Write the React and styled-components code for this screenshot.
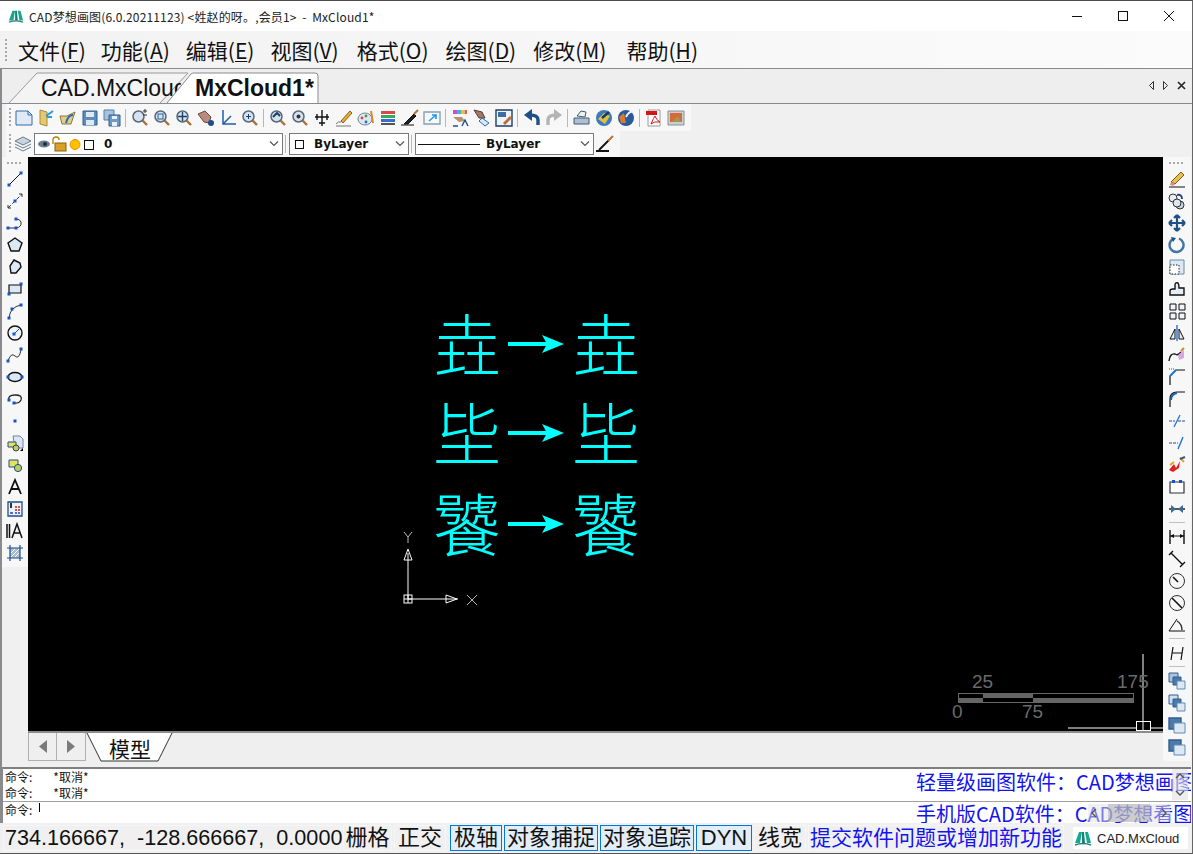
import React from 'react';
import styled, { createGlobalStyle } from 'styled-components';

const GlobalStyle = createGlobalStyle`
    html, body {
        margin: 0;
        padding: 0;
        background: #f0f0f0;
        font-family: "Liberation Sans", "Noto Sans CJK SC", sans-serif;
    }
    #root {
        width: 1193px;
        height: 854px;
        overflow: hidden;
    }
`;

const Window = styled.div`
    width: 1193px;
    height: 854px;
    display: flex;
    flex-direction: column;
    box-sizing: border-box;
    border-top: 1px solid #4a4a4a;
    border-bottom: 1px solid #555;
    border-right: 1px solid #666;
    background: #f0f0f0;
    overflow: hidden;
`;

const TitleBar = styled.div`
    height: 30px;
    flex: none;
    background: #fff;
    display: flex;
    align-items: center;
    padding-left: 8px;
`;

const TitleText = styled.div`
    margin-left: 5px;
    font-family: "Noto Sans CJK SC", sans-serif;
    font-size: 12px;
    letter-spacing: 0.15px;
    color: #222;
    white-space: pre;
    flex: 1;
`;

const WinButton = styled.div`
    width: 46px;
    height: 30px;
    display: flex;
    align-items: center;
    justify-content: center;
`;

const MenuBar = styled.div`
    height: 38px;
    flex: none;
    background: linear-gradient(90deg, #f2f2f2, #fbfbfb);
    display: flex;
    align-items: center;
    border-bottom: 1px solid #8a8a8e;
    padding-left: 5px;
    box-sizing: border-box;
`;

const Gripper = styled.div`
    width: 2px;
    height: ${(p) => p.$h || 20}px;
    margin-right: ${(p) => p.$gap ?? 11}px;
    flex: none;
    background-image: linear-gradient(#a8a8a8 50%, transparent 50%);
    background-size: 2px 4px;
`;

const MenuItem = styled.div`
    font-family: "Noto Sans CJK SC", sans-serif;
    font-size: 21px;
    color: #111;
    margin-right: ${(p) => p.$gap ?? 16}px;
    white-space: nowrap;
    u { text-underline-offset: 2px; text-decoration-thickness: 1px; }
`;

const Workspace = styled.div`
    height: 754px;
    flex: none;
    display: flex;
    flex-direction: column;
    box-sizing: border-box;
    border-left: 2px solid #8a8a8e;
`;

const TabBar = styled.div`
    height: 35px;
    flex: none;
    position: relative;
    border-bottom: 1px solid #8a8a8e;
    box-sizing: border-box;
    background: #eee;
`;

const TabShape = styled.svg`
    position: absolute;
    left: -2px;
    top: 0;
`;

const TabLabel = styled.div`
    position: absolute;
    top: 4px;
    left: ${(p) => p.$left}px;
    width: ${(p) => p.$width}px;
    overflow: hidden;
    font-size: 23px;
    line-height: 30px;
    font-weight: ${(p) => (p.$active ? 700 : 400)};
    color: #111;
    white-space: nowrap;
`;

const TabArrows = styled.div`
    position: absolute;
    right: 6px;
    top: 12px;
    display: flex;
    align-items: center;
    gap: 9px;
`;

const ToolRow = styled.div`
    height: ${(p) => p.$h}px;
    flex: none;
    display: flex;
    align-items: center;
    padding-left: 4px;
    background: #f0f0f0;
`;

const ToolStrip = styled.div`
    display: flex;
    align-items: center;
    height: 100%;
    background: #f7f7f7;
    padding-left: 3px;
    padding-right: 4px;
`;

const ToolIcon = styled.div`
    width: 22px;
    height: 22px;
    flex: none;
    display: flex;
    align-items: center;
    justify-content: center;

    & svg {
        width: 18px;
        height: 18px;
    }
`;

const ToolSep = styled.div`
    width: 1px;
    height: 18px;
    background: #b8b8b8;
    margin: 0 3px 0 2px;
    flex: none;
`;

const Combo = styled.div`
    width: ${(p) => p.$w}px;
    height: 22px;
    box-sizing: border-box;
    border: 1px solid #7a7a7a;
    background: #fff;
    display: flex;
    align-items: center;
    font-size: 12px;
    font-family: "DejaVu Sans", sans-serif;
    font-weight: 700;
    color: #111;
    position: relative;
    flex: none;
`;

const ComboArrow = styled.svg`
    position: absolute;
    right: 3px;
    top: 7px;
`;

const ComboIcons = styled.svg`
    margin-left: 2px;
    flex: none;
`;

const ComboValue = styled.span`
    margin-left: 9px;
`;

const Check = styled.span`
    width: 9px;
    height: 9px;
    box-sizing: border-box;
    border: 1px solid #111;
    flex: none;
    margin: 0 10px 0 5px;
`;

const LineSample = styled.span`
    width: 62px;
    height: 1px;
    background: #111;
    margin: 0 6px 0 2px;
`;

const Middle = styled.div`
    height: 610px;
    flex: none;
    display: flex;
    align-items: flex-start;
    background: #f0f0f0;
`;

const SideBar = styled.div`
    width: ${(p) => p.$w}px;
    flex: none;
    display: flex;
    flex-direction: column;
    align-items: center;
    box-sizing: border-box;
    padding-top: 5px;
    background: #f7f7f7;
    margin-right: ${(p) => (p.$right ? 1 : 0)}px;
    height: ${(p) => p.$h}px;
`;

const SideGrip = styled.div`
    width: 16px;
    height: 2px;
    margin-bottom: 4px;
    flex: none;
    background-image: linear-gradient(90deg, #a8a8a8 50%, transparent 50%);
    background-size: 4px 2px;
`;

const SideIcon = styled.div`
    width: 22px;
    height: 22px;
    flex: none;
    display: flex;
    align-items: center;
    justify-content: center;
`;

const SideSep = styled.div`
    width: 16px;
    height: 1px;
    background: #c0c0c0;
    margin: 2px 0 3px;
    flex: none;
`;

const CanvasColumn = styled.div`
    flex: 1;
    min-width: 0;
    display: flex;
    flex-direction: column;
`;

const Canvas = styled.div`
    height: 574px;
    flex: none;
    background: #000;
    position: relative;
    overflow: hidden;
    border-bottom: 2px solid #8c8c8c;
`;

const Glyph = styled.div`
    position: absolute;
    left: ${(p) => p.$x}px;
    top: ${(p) => p.$y}px;
    font-family: "Noto Sans CJK SC", sans-serif;
    font-size: 68px;
    font-weight: 300;
    line-height: 68px;
    color: #00ffff;
`;

const CanvasArt = styled.svg`
    position: absolute;
    left: 0;
    top: 0;
`;

const ScaleNum = styled.div`
    position: absolute;
    left: ${(p) => p.$x}px;
    top: ${(p) => p.$y}px;
    color: #6a6a6a;
    font-size: 19px;
    line-height: 20px;
`;

const SheetBar = styled.div`
    height: 32px;
    flex: none;
    display: flex;
    align-items: flex-start;
    position: relative;
    background: #efefef;
`;

const SheetNav = styled.div`
    width: 29px;
    height: 28px;
    box-sizing: border-box;
    border: 1px solid #b0b0b0;
    border-left-width: ${(p) => (p.$first ? 1 : 0)}px;
    border-top: 0;
    display: flex;
    align-items: center;
    justify-content: center;
`;

const SheetTab = styled.svg`
    flex: none;
`;

const SheetLabel = styled.div`
    position: absolute;
    left: 81px;
    top: 1px;
    font-family: "Noto Sans CJK SC", sans-serif;
    font-size: 21px;
    line-height: 28px;
    color: #111;
`;

const CommandArea = styled.div`
    height: 56px;
    flex: none;
    display: flex;
    flex-direction: column;
    box-sizing: border-box;
    margin-right: 1px;
    border-top: 2px solid #7f7f7f;
    border-left: 1px solid #8a8a8e;
    background: #fff;
    position: relative;
    overflow: hidden;
`;

const History = styled.div`
    height: 33px;
    flex: none;
    box-sizing: border-box;
    border-bottom: 1px solid #a0a0a0;
    padding-left: 2px;
`;

const CmdLine = styled.div`
    height: 16px;
    padding-left: ${(p) => p.$pad || 0}px;
    font-family: "Noto Sans CJK SC", sans-serif;
    font-size: 12px;
    line-height: 16px;
    color: #111;
    display: flex;
    align-items: center;
`;

const CmdValue = styled.span`
    margin-left: 21px;
`;

const Caret = styled.span`
    width: 1px;
    height: 9px;
    margin-left: 7px;
    margin-top: -5px;
    background: #000;
`;

const AdLine = styled.div`
    position: absolute;
    left: 913px;
    top: ${(p) => p.$y}px;
    font-family: "Noto Sans CJK SC", sans-serif;
    font-size: 20px;
    line-height: 24px;
    color: #1414ee;
    white-space: nowrap;
`;

const VScroll = styled.div`
    position: absolute;
    right: 3px;
    top: 0;
    width: 16px;
    height: 31px;
    background: rgba(225, 225, 225, 0.6);
    display: flex;
    flex-direction: column;
    align-items: center;
    justify-content: space-between;
    padding: 4px 0;
    box-sizing: border-box;
`;

const HScroll = styled.div`
    position: absolute;
    right: 21px;
    top: 35px;
    width: 82px;
    height: 18px;
    background: rgba(225, 225, 225, 0.5);
    display: flex;
    align-items: center;
    justify-content: space-between;
    padding: 0 3px;
    box-sizing: border-box;
`;

const HThumb = styled.div`
    width: 42px;
    height: 18px;
    background: rgba(170, 170, 170, 0.5);
`;

const StatusBar = styled.div`
    flex: 1;
    min-height: 0;
    display: flex;
    align-items: center;
    gap: 2px;
    padding-left: 3px;
    background: #f0f0f0;
`;

const StatusCell = styled.div`
    width: ${(p) => p.$w}px;
    height: 26px;
    margin-right: ${(p) => p.$mr || 0}px;
    box-sizing: border-box;
    border: 1px solid ${(p) => (p.$on ? '#0078d7' : '#f6f6f6')};
    background: ${(p) => (p.$on ? '#e1edf7' : 'transparent')};
    font-family: "Liberation Sans", "Noto Sans CJK SC", sans-serif;
    font-size: ${(p) => p.$size || 22}px;
    line-height: 24px;
    text-align: ${(p) => (p.$left ? 'left' : 'center')};
    padding-left: ${(p) => (p.$left ? 1 : 0)}px;
    color: ${(p) => p.$color || '#111'};
    white-space: pre;
    flex: none;
`;

const LogoCell = styled.div`
    width: 115px;
    height: 22px;
    background: #fff;
    margin-left: 7px;
    display: flex;
    align-items: center;
    padding-left: 1px;
    box-sizing: border-box;
    gap: 5px;
    font-size: 13px;
    color: #222;
    flex: none;
`;

// small cad style icons, drawn because the icon packages have nothing like them
const Svg = ({ children, size = 18 }) => (
    <svg width={size} height={size} viewBox="0 0 18 18" fill="none">
        {children}
    </svg>
);

const Dot = ({ x, y }) => <rect x={x - 1.5} y={y - 1.5} width="3" height="3" fill="#1456c8" />;

const blue = '#1f4f86';

const Logo = ({ size = 16 }) => (
    <svg width={size} height={size} viewBox="0 0 18 16">
        <path d="M1 13 L5 2 H8 L6 13Z" fill="#16a88e" />
        <path d="M8 2 H10 L11 13 H8Z" fill="#1f7f78" />
        <path d="M11 2 H14 L17 13 H13Z" fill="#16a88e" />
        <path d="M1 15 Q9 12 17 15" stroke="#1f7f78" strokeWidth="1.4" fill="none" />
    </svg>
);

const Magnifier = ({ mark }) => (
    <Svg>
        <circle cx="7.5" cy="7.5" r="5.5" fill="#d6e2ee" stroke="#56687c" strokeWidth="1.5" />
        <path d="M11.5 11.5 L16 16" stroke="#a8703a" strokeWidth="2.4" />
        {mark}
    </Svg>
);

const Chevron = ({ up }) => (
    <svg width="10" height="6">
        <path d={up ? 'M1 5 L5 1 L9 5' : 'M1 1 L5 5 L9 1'} fill="none" stroke="#555" strokeWidth="1.4" />
    </svg>
);

const ComboChevron = () => (
    <ComboArrow width="10" height="6">
        <path d="M1 0.5 L5 4.5 L9 0.5" fill="none" stroke="#555" strokeWidth="1.2" />
    </ComboArrow>
);

const topIcons = [
    <Svg key="new"><path d="M1 2 H13 L17 6 V16 H1Z" fill="#dfeaf6" stroke="#2f6ca8" /><path d="M13 2 V6 H17" stroke="#2f6ca8" /></Svg>,
    <Svg key="open"><path d="M3 1 L10 3 V17 L3 15Z" fill="#e8c86e" stroke="#a88a3a" /><path d="M9 7 L16 2 M10 8 L15 8" stroke="#2a9ae0" strokeWidth="2" /></Svg>,
    <Svg key="open2"><path d="M1 7 H8 L16 3 L12 15 H3Z" fill="#e0cc8c" stroke="#8a7a3e" /><path d="M7 14 Q9 6 14 6" stroke="#2f6ca8" strokeWidth="2" /></Svg>,
    <Svg key="save"><path d="M2 2 H16 V16 H2Z" fill="#5f8dbb" stroke="#2f5f92" /><path d="M5 3 H13 V8 H5Z M5 11 H13 V16 H5Z" fill="#dfe9f3" /></Svg>,
    <Svg key="saveall"><path d="M1 1 H11 V11 H1Z" fill="#a9c3dd" stroke="#4f7fae" /><path d="M6 6 H17 V17 H6Z" fill="#6f9ac4" stroke="#2f5f92" /><path d="M9 7 H14 V10 H9Z M9 13 H14 V17 H9Z" fill="#e8f0f8" /></Svg>,
    'sep',
    <Magnifier key="z1" mark={<path d="M14 0 V4 M12 2 H16 M12 6 H16" stroke="#333" />} />,
    <Magnifier key="z2" mark={<rect x="5" y="5" width="5" height="5" stroke="#2f5f92" />} />,
    <Magnifier key="z3" mark={<path d="M7.5 3 V12 M3 7.5 H12" stroke="#1f3f66" strokeWidth="1.4" />} />,
    <Svg key="hand"><path d="M1 5 L8 2 L14 8 L12 14 L7 13Z" fill="#b98a80" stroke="#6a4a44" /><circle cx="14" cy="14" r="3" fill="#1f4f86" /></Svg>,
    <Svg key="axes"><path d="M4 1 V15 H17 M4 15 L12 7" stroke="#1f5fa8" strokeWidth="1.5" /></Svg>,
    <Magnifier key="z4" mark={<path d="M7.5 5 V10 M5 7.5 H10" stroke="#1f3f66" />} />,
    'sep',
    <Magnifier key="z5" mark={<path d="M4 8 L8 4 L11 7" stroke="#1f3f66" strokeWidth="2" />} />,
    <Magnifier key="z6" mark={<circle cx="7.5" cy="7.5" r="2" fill="#333" />} />,
    <Svg key="pan"><path d="M9 1 V17 M2 8 H16 M4 5 V11 M14 5 V11 M6 14 H12" stroke="#111" strokeWidth="1.4" /></Svg>,
    <Svg key="brush"><path d="M6 12 L15 2 L17 4 L8 14Z" fill="#e8b13a" stroke="#8a5a1e" /><path d="M1 15 Q3 12 6 13 M1 17 H16" stroke="#777" /></Svg>,
    <Svg key="palette"><ellipse cx="8" cy="10" rx="7" ry="6" fill="#dfe7ee" stroke="#6a86a0" /><circle cx="5" cy="9" r="1.4" fill="#e04040" /><circle cx="9" cy="7" r="1.4" fill="#3aa040" /><circle cx="9" cy="13" r="1.4" fill="#3a60e0" /><path d="M14 2 L16 14" stroke="#d88a2a" strokeWidth="2" /></Svg>,
    <Svg key="layers"><path d="M2 2 H16 V5 H2Z" fill="#d84a4a" /><path d="M2 6 H16 V9 H2Z" fill="#3aa85a" /><path d="M2 10 H16 V13 H2Z" fill="#3a6ad8" /><path d="M2 14 H16 V16 H2Z" fill="#555" /></Svg>,
    <Svg key="match"><path d="M0 16 H13 M3 15 L13 5 L15 7 L7 15Z" fill="#222" stroke="#111" /><path d="M13 5 L17 1" stroke="#b8703a" strokeWidth="2" /></Svg>,
    <Svg key="tbl"><path d="M1 3 H17 V15 H1Z" fill="#f4f8fb" stroke="#8aa0b4" strokeWidth="1.4" /><path d="M6 12 L13 6 M9 6 H13 V10" stroke="#1f9ae8" strokeWidth="1.6" /></Svg>,
    'sep',
    <Svg key="sa"><path d="M2 1 H16 V5 H2Z" fill="#c850c8" /><path d="M6 1 H10 V5 H6Z" fill="#40b0e0" /><path d="M10 1 H14 V5 H10Z" fill="#e8c030" /><path d="M2 8 L11 8 L14 12 L8 13Z" fill="#b9907a" /><path d="M2 17 H7 M11 17 L14 11 L17 17" stroke="#1f4f86" strokeWidth="1.4" /></Svg>,
    <Svg key="prop"><path d="M1 1 L9 3 L12 9 L6 9Z" fill="#a5786e" stroke="#5a3a34" /><path d="M9 9 L16 14 L12 17 L6 12Z" fill="#d8e8f4" stroke="#2f6ca8" /></Svg>,
    <Svg key="sheet"><path d="M1 1 H17 V17 H1Z" fill="#eef3f8" stroke="#1f3f66" strokeWidth="1.4" /><path d="M3 3 H11 V8 H3Z" fill="#3f6ea0" /><path d="M9 15 L16 8" stroke="#b8703a" strokeWidth="3" /></Svg>,
    'sep',
    <Svg key="undo"><path d="M15 16 V11 Q15 6 7 6" stroke="#1f4f86" strokeWidth="3.4" /><path d="M9 0 L1 6 L9 12Z" fill="#1f4f86" /></Svg>,
    <Svg key="redo"><path d="M3 16 V11 Q3 6 11 6" stroke="#b4b4b4" strokeWidth="3.4" /><path d="M9 0 L17 6 L9 12Z" fill="#b4b4b4" /></Svg>,
    'sep',
    <Svg key="print"><path d="M4 7 L8 2 L13 3 L12 8Z" fill="#f0f0f0" stroke="#3f5a78" /><path d="M1 9 H16 V15 H1Z" fill="#aebfd0" stroke="#3f5a78" /></Svg>,
    <Svg key="globe1"><circle cx="9" cy="9" r="8" fill="#3a7abf" /><path d="M3 10 L9 4 L15 7 L10 15Z" fill="#e0c040" /><path d="M7 9 L14 3" stroke="#143a66" strokeWidth="2.4" /></Svg>,
    <Svg key="globe2"><circle cx="9" cy="9" r="8" fill="#2a5a98" /><path d="M2 8 L7 4 L9 14 L4 14Z" fill="#d87a30" /><path d="M9 8 Q12 2 16 3" stroke="#f0f0f0" strokeWidth="2" /></Svg>,
    'sep',
    <Svg key="pdf"><path d="M3 1 H15 V17 H3Z" fill="#fff" stroke="#9a9a9a" /><path d="M1 2 H12 V6 H1Z" fill="#d01818" /><path d="M6 15 Q9 8 10 7 Q11 11 15 13 Q9 12 6 15" stroke="#d01818" /></Svg>,
    <Svg key="img"><path d="M1 2 H17 V16 H1Z" fill="#c8d0d4" stroke="#8a9298" /><path d="M3 4 H15 V13 H3Z" fill="#d86a3a" /><path d="M5 13 L11 7 L14 13Z" fill="#9a9a5a" /></Svg>,
];

const leftIcons = [
    <Svg key="line"><path d="M3 15 L15 3" stroke="#111" /><Dot x={3} y={15} /><Dot x={15} y={3} /></Svg>,
    <Svg key="xline"><path d="M2 16 L16 2" stroke="#333" strokeDasharray="4 2" /><path d="M13 2 H16 V5 M2 13 V16 H5" stroke="#333" /><Dot x={9} y={9} /></Svg>,
    <Svg key="pline"><path d="M2 14 H10 Q16 13 15 8 Q14 5 10 5" stroke="#333" /><Dot x={2} y={14} /><Dot x={10} y={14} /><Dot x={10} y={5} /></Svg>,
    <Svg key="polygon"><path d="M9 2 L16 7 L13 15 H5 L2 7Z" fill="#dce8f4" stroke="#111" strokeWidth="1.4" /></Svg>,
    <Svg key="cloud"><path d="M8 2 L14 5 L15 9 L10 15 L5 15 L4 8Z" fill="#dce8f4" stroke="#111" strokeWidth="1.4" /></Svg>,
    <Svg key="rect"><path d="M3 5 H15 V13 H3Z" fill="#dce8f4" stroke="#111" strokeWidth="1.2" /><Dot x={3} y={14} /><Dot x={15} y={4} /></Svg>,
    <Svg key="arc"><path d="M3 16 Q4 5 15 3" stroke="#333" /><Dot x={3} y={16} /><Dot x={6} y={7} /><Dot x={15} y={3} /></Svg>,
    <Svg key="circle"><circle cx="9" cy="9" r="7" fill="#eef4fa" stroke="#111" strokeWidth="1.4" /><path d="M9 9 L13 5" stroke="#1456c8" /><Dot x={8} y={10} /></Svg>,
    <Svg key="spline"><path d="M2 15 Q5 6 9 10 Q13 14 15 4" stroke="#333" /><Dot x={2} y={15} /><Dot x={15} y={3} /></Svg>,
    <Svg key="ellipse"><ellipse cx="9" cy="9" rx="7" ry="4.5" fill="#dce8f4" stroke="#111" strokeWidth="1.4" /><Dot x={2} y={9} /><Dot x={16} y={9} /></Svg>,
    <Svg key="earc"><path d="M3 11 Q1 5 9 5 Q17 5 15 10 Q13 14 7 13" stroke="#222" strokeWidth="1.3" /><Dot x={3} y={10} /><Dot x={8} y={13} /></Svg>,
    <Svg key="point"><Dot x={9} y={9} /></Svg>,
    <Svg key="insert"><path d="M7 2 H14 L17 5 V14 H9Z" fill="#dde6ee" stroke="#6a86a0" /><path d="M2 8 H10 V13 H2Z" fill="#e8e060" stroke="#1f4f86" /><circle cx="10" cy="14" r="3" fill="#b8d060" stroke="#444" /><path d="M14 17 L17 14 V17Z" fill="#000" /></Svg>,
    <Svg key="block"><path d="M3 4 H12 V11 H3Z" fill="#e8e060" stroke="#1f4f86" /><circle cx="12" cy="12" r="3.6" fill="#b8d060" stroke="#1f4f86" /></Svg>,
    <Svg key="text"><path d="M3 16 L9 2 L15 16 M5.5 11 H12.5" stroke="#111" strokeWidth="1.8" /></Svg>,
    <Svg key="table"><path d="M2 2 H16 V16 H2Z" fill="#eef2f6" stroke="#1f4f86" strokeWidth="1.3" /><path d="M5 3 V8" stroke="#333" strokeWidth="2" /><path d="M9 7 H11 M12 7 H14 M9 10 H11 M12 10 H14" stroke="#c02020" strokeWidth="1.6" /><path d="M4 13 H7 M9 13 H11 M12 13 H14" stroke="#2040c0" strokeWidth="1.6" /></Svg>,
    <Svg key="mtext"><path d="M1 2 V16 M3.5 2 V16 M6 16 L11 2 L16 16 M8 11 H14" stroke="#111" strokeWidth="1.5" /></Svg>,
    <Svg key="hatch"><path d="M4 4 H14 V14 H4Z" fill="#a8bcd0" /><path d="M1 4 H17 M1 14 H17 M4 1 V17 M14 1 V17" stroke="#1f4f86" strokeWidth="1.2" /><path d="M5 13 L13 5 M5 9 L9 5 M9 13 L13 9" stroke="#fff" /></Svg>,
];

const overlap = (variant) => (
    <Svg key={`ov${variant}`}>
        {variant < 2 && <path d="M1 1 H10 V10 H1Z" fill={variant ? '#cfe0ee' : '#a8c4dc'} stroke="#2f5f92" />}
        {variant < 2 && <path d="M5 5 H13 V13 H5Z" fill="#4f79a8" stroke="#2f5f92" />}
        {variant < 2 && <path d="M9 9 H17 V17 H9Z" fill="#dce8f4" stroke="#5f8db0" />}
        {variant >= 2 && <path d="M1 2 H13 V13 H1Z" fill="#4f79a8" stroke="#2f5f92" strokeWidth="1.4" />}
        {variant >= 2 && <path d="M6 7 H17 V17 H6Z" fill="#dce8f4" stroke="#5f8db0" />}
    </Svg>
);

const rightIcons = [
    <Svg key="erase"><path d="M3 12 L13 2 L16 5 L7 14Z" fill="#e8c050" stroke="#7a5a20" /><path d="M3 12 L7 14 L5 16 L2 15Z" fill="#e08a8a" /><path d="M1 17 H17" stroke="#111" /></Svg>,
    <Svg key="copy"><circle cx="5" cy="6" r="4" fill="#e8eef4" stroke="#333" /><circle cx="12" cy="13" r="4" fill="#c8d4e0" stroke="#333" /><circle cx="9" cy="11" r="4" fill="#dfe7ee" stroke="#333" /><path d="M9 3 Q14 2 14 7" stroke="#1f4f86" strokeWidth="2" /></Svg>,
    <Svg key="move"><path d="M9 1 V17 M1 9 H17 M9 1 L6 4 M9 1 L12 4 M9 17 L6 14 M9 17 L12 14 M1 9 L4 6 M1 9 L4 12 M17 9 L14 6 M17 9 L14 12" stroke={blue} strokeWidth="2.2" /></Svg>,
    <Svg key="rotate"><path d="M5 3 A7 7 0 1 0 11 2.5" stroke="#3f74a8" strokeWidth="2.4" /><path d="M3 1 L8 2 L5 6Z" fill="#1f4f86" /></Svg>,
    <Svg key="scale"><path d="M2 2 H16 V16 H2Z" fill="#dce8f4" stroke="#6a8aa8" /><path d="M2 7 H11 V16 H2Z" fill="#fff" stroke="#222" strokeDasharray="1.5 1.5" /></Svg>,
    <Svg key="stretch"><path d="M2 15 V11 Q2 9 5 9 H7 V5 Q7 2 10 3 Q11 4 11 8 H16 V15Z" fill="#e4eef6" stroke="#111" strokeWidth="1.4" /></Svg>,
    <Svg key="array"><path d="M2 2 H8 V8 H2Z M11 2 H17 V8 H11Z M2 11 H8 V17 H2Z M11 11 H17 V17 H11Z" fill="#eef4fa" stroke="#111" /></Svg>,
    <Svg key="mirror"><path d="M2 15 L7 5 V15Z M16 15 L11 5 V15Z" fill="#e4eef6" stroke="#111" /><path d="M9 1 V17" stroke="#1f6fd0" strokeWidth="1.4" /></Svg>,
    <Svg key="edit"><path d="M1 15 Q2 7 7 8 Q10 10 13 6" stroke="#111" strokeWidth="1.4" /><path d="M10 9 L16 4 L16 12 L11 14Z" fill="#d8a8e0" /><path d="M13 5 L16 2" stroke="#d88a2a" strokeWidth="2" /></Svg>,
    <Svg key="chamfer"><path d="M2 17 V8 L8 2 H17" stroke="#111" strokeWidth="1.2" /><path d="M2 8 L8 2" stroke="#1f7fd8" strokeWidth="2" /><path d="M1 1 H7" stroke="#555" strokeDasharray="1 1" /></Svg>,
    <Svg key="fillet"><path d="M2 17 V9 Q2 2 9 2 H17" stroke="#111" strokeWidth="1.2" /><path d="M3 10 Q3 4 9 3" stroke="#1f5fa8" strokeWidth="2" /></Svg>,
    <Svg key="trim"><path d="M1 9 H7 M10 9 H17" stroke="#1f4f86" strokeDasharray="3 1" /><path d="M6 15 L12 3" stroke="#1f6fd0" strokeWidth="1.2" /></Svg>,
    <Svg key="extend"><path d="M1 9 H10" stroke="#1f4f86" strokeDasharray="3 1" /><path d="M10 15 L15 3" stroke="#1f6fd0" strokeWidth="1.4" /></Svg>,
    <Svg key="explode"><path d="M1 14 L6 8 L8 12 L12 5 L11 12 L5 16Z" fill="#e02020" /><path d="M2 9 L6 6 M12 2 L16 6" stroke="#e8a020" strokeWidth="2" /><path d="M12 3 L17 1" stroke="#3f5a78" strokeWidth="2" /></Svg>,
    <Svg key="dimrect"><path d="M2 4 H16 V15 H2Z" fill="#fff" stroke="#333" strokeWidth="1.2" /><rect x="4" y="2" width="3" height="3" fill="#1456c8" /><rect x="11" y="2" width="3" height="3" fill="#1456c8" /></Svg>,
    <Svg key="join"><path d="M1 9 H17" stroke="#111" strokeWidth="1.4" /><path d="M3 5 L8 9 L3 13Z M15 5 L10 9 L15 13Z" fill="#3f6a98" /></Svg>,
    'sep',
    <Svg key="dim1"><path d="M2 2 V16 M16 2 V16" stroke="#111" strokeWidth="1.4" /><path d="M2 8 H16" stroke="#111" /><path d="M2 8 L6 6 V10Z M16 8 L12 6 V10Z" fill="#111" /></Svg>,
    <Svg key="dim2"><path d="M1 5 L5 1 M12 17 L17 12 M3 3 L15 15" stroke="#111" strokeWidth="1.4" /></Svg>,
    <Svg key="dim3"><circle cx="9" cy="9" r="7.5" stroke="#333" /><path d="M5 5 L10 10" stroke="#111" strokeWidth="1.6" /></Svg>,
    <Svg key="dim4"><circle cx="9" cy="9" r="7.5" stroke="#333" /><path d="M4 4 L14 14" stroke="#111" strokeWidth="1.6" /></Svg>,
    <Svg key="dim5"><path d="M1 15 H17 M1 15 L9 3" stroke="#111" /><path d="M9 5 Q14 8 14 14" stroke="#333" strokeWidth="1.4" /></Svg>,
    'sep',
    <Svg key="dim6"><path d="M3 16 L5 3 M13 16 L15 3 M4 9 H14" stroke="#111" strokeWidth="1.2" /></Svg>,
    'sep',
    overlap(0),
    overlap(1),
    overlap(2),
    overlap(3),
];

const canvasGlyphs = [
    { ch: '垚', y: 151 },
    { ch: '坒', y: 240 },
    { ch: '饕', y: 331 },
];

const App = () => (
    <>
        <GlobalStyle />
        <Window>
            <TitleBar>
                <Logo />
                <TitleText>CAD梦想画图(6.0.20211123) &lt;姓赵的呀。,会员1&gt;  -  MxCloud1*</TitleText>
                <WinButton>
                    <svg width="10" height="10"><path d="M0 5.5 H10" stroke="#111" /></svg>
                </WinButton>
                <WinButton>
                    <svg width="10" height="10"><rect x="0.5" y="0.5" width="9" height="9" fill="none" stroke="#111" /></svg>
                </WinButton>
                <WinButton>
                    <svg width="10" height="10"><path d="M0 0 L10 10 M10 0 L0 10" stroke="#111" /></svg>
                </WinButton>
            </TitleBar>
            <MenuBar>
                <Gripper $h={22} />
                <MenuItem $gap={15}>文件(<u>F</u>)</MenuItem>
                <MenuItem>功能(<u>A</u>)</MenuItem>
                <MenuItem>编辑(<u>E</u>)</MenuItem>
                <MenuItem $gap={18}>视图(<u>V</u>)</MenuItem>
                <MenuItem $gap={17}>格式(<u>O</u>)</MenuItem>
                <MenuItem $gap={17}>绘图(<u>D</u>)</MenuItem>
                <MenuItem $gap={20}>修改(<u>M</u>)</MenuItem>
                <MenuItem>帮助(<u>H</u>)</MenuItem>
            </MenuBar>
            <Workspace>
                <TabBar>
                    <TabShape width="330" height="35">
                        <path d="M9 34 L37 4 H188 L160 34" fill="#f4f4f4" stroke="#9a9a9a" />
                    </TabShape>
                    <TabLabel $left={39} $width={140}>CAD.MxCloud</TabLabel>
                    <TabShape width="330" height="35">
                        <path d="M167 34 L191 5 Q192 4 194 4 H315 Q318 4 318 7 V34" fill="#fff" stroke="#8a8a8e" />
                    </TabShape>
                    <TabLabel $left={193} $width={122} $active>MxCloud1*</TabLabel>
                    <TabArrows>
                        <svg width="5" height="9"><path d="M4.5 0.5 V8.5 L0.5 4.5Z" fill="none" stroke="#333" /></svg>
                        <svg width="5" height="9"><path d="M0.5 0.5 V8.5 L4.5 4.5Z" fill="none" stroke="#333" /></svg>
                        <svg width="9" height="9"><path d="M1 1 L8 8 M8 1 L1 8" stroke="#222" strokeWidth="1.6" /></svg>
                    </TabArrows>
                </TabBar>
                <ToolRow $h={27}>
                    <ToolStrip>
                        <Gripper $h={20} $gap={2} />
                        {topIcons.map((icon, i) =>
                            icon === 'sep' ? <ToolSep key={i} /> : <ToolIcon key={i}>{icon}</ToolIcon>
                        )}
                    </ToolStrip>
                </ToolRow>
                <ToolRow $h={26}>
                    <ToolStrip>
                        <Gripper $h={20} $gap={1} />
                        <ToolIcon>
                            <Svg>
                                <path d="M9 2 L17 6 L9 10 L1 6Z" fill="#c8d4e0" stroke="#6a7a8a" />
                                <path d="M1 9 L9 13 L17 9 M1 12 L9 16 L17 12" stroke="#6a7a8a" />
                            </Svg>
                        </ToolIcon>
                        <Combo $w={249}>
                            <ComboIcons width="58" height="16" viewBox="0 0 58 16">
                                <ellipse cx="7" cy="8" rx="6" ry="3.5" fill="#6a7f92" />
                                <circle cx="8" cy="8" r="2" fill="#1f2f3f" />
                                <path d="M16 8 V4 Q16 1 19 1 Q22 1 22 4" stroke="#b8860b" strokeWidth="1.4" fill="none" />
                                <rect x="18" y="7" width="11" height="8" fill="#d8a028" stroke="#8a6010" />
                                <circle cx="38" cy="8.5" r="5" fill="#ffc000" stroke="#f09000" />
                                <rect x="47.5" y="4.5" width="9" height="9" fill="#fff" stroke="#111" />
                            </ComboIcons>
                            <ComboValue>0</ComboValue>
                            <ComboChevron />
                        </Combo>
                        <ToolSep />
                        <Combo $w={120}>
                            <Check />
                            ByLayer
                            <ComboChevron />
                        </Combo>
                        <ToolSep />
                        <Combo $w={179}>
                            <LineSample />
                            ByLayer
                            <ComboChevron />
                        </Combo>
                        <ToolIcon>
                            <Svg>
                                <path d="M0 16 H13 M3 15 L13 5" stroke="#111" strokeWidth="1.8" />
                                <path d="M12 6 L17 1" stroke="#b8703a" strokeWidth="2" />
                            </Svg>
                        </ToolIcon>
                    </ToolStrip>
                </ToolRow>
                <Middle>
                    <SideBar $w={26} $h={410}>
                        <SideGrip />
                        {leftIcons.map((icon, i) => <SideIcon key={i}>{icon}</SideIcon>)}
                    </SideBar>
                    <CanvasColumn>
                        <Canvas>
                            {canvasGlyphs.map((g) => (
                                <React.Fragment key={g.ch}>
                                    <Glyph $x={405} $y={g.y}>{g.ch}</Glyph>
                                    <Glyph $x={544} $y={g.y}>{g.ch}</Glyph>
                                </React.Fragment>
                            ))}
                            <CanvasArt width="1135" height="574">
                                {[187, 276, 367].map((y) => (
                                    <g key={y}>
                                        <rect x="480" y={y - 2} width="40" height="4" fill="#00ffff" />
                                        <path d={`M514 ${y - 9} L536 ${y} L514 ${y + 9} L519 ${y}Z`} fill="#00ffff" />
                                    </g>
                                ))}
                                <path d="M380 442 H430 M380 442 V396" stroke="#fff" fill="none" />
                                <rect x="376" y="438" width="8" height="8" fill="none" stroke="#fff" />
                                <path d="M380 438 V446 M376 442 H384" stroke="#fff" />
                                <path d="M418 438 L429 442 L418 446Z M376 403 L380 392 L384 403Z" fill="none" stroke="#fff" />
                                <path d="M439 438 L449 448 M449 438 L439 448 M376 375 L380 380 L384 375 M380 380 V386" stroke="#bbb" fill="none" />
                                <path d="M1115 497 V564 M1040 571 H1108 M1123 571 H1135" stroke="#fff" fill="none" />
                                <rect x="1108.5" y="564.5" width="14" height="9" fill="#000" stroke="#fff" />
                                <path d="M1115 564 V574" stroke="#fff" />
                                <rect x="930.5" y="536.5" width="175" height="9" fill="none" stroke="#666" />
                                <rect x="930" y="541" width="25" height="5" fill="#666" />
                                <rect x="955" y="536" width="50" height="5" fill="#666" />
                                <rect x="1005" y="541" width="101" height="5" fill="#666" />
                            </CanvasArt>
                            <ScaleNum $x={944} $y={515}>25</ScaleNum>
                            <ScaleNum $x={1089} $y={515}>175</ScaleNum>
                            <ScaleNum $x={924} $y={545}>0</ScaleNum>
                            <ScaleNum $x={994} $y={545}>75</ScaleNum>
                        </Canvas>
                        <SheetBar>
                            <SheetNav $first>
                                <svg width="8" height="13"><path d="M8 0 V13 L0 6.5Z" fill="#7a7a7a" /></svg>
                            </SheetNav>
                            <SheetNav>
                                <svg width="8" height="13"><path d="M0 0 V13 L8 6.5Z" fill="#7a7a7a" /></svg>
                            </SheetNav>
                            <SheetTab width="88" height="30">
                                <path d="M1 0 L15 28 H72 L86 0" fill="#fff" stroke="#333" />
                            </SheetTab>
                            <SheetLabel>模型</SheetLabel>
                        </SheetBar>
                    </CanvasColumn>
                    <SideBar $w={28} $right $h={604}>
                        <SideGrip />
                        {rightIcons.map((icon, i) =>
                            icon === 'sep' ? <SideSep key={i} /> : <SideIcon key={i}>{icon}</SideIcon>
                        )}
                    </SideBar>
                </Middle>
                <CommandArea>
                    <History>
                        <CmdLine>命令:<CmdValue>*取消*</CmdValue></CmdLine>
                        <CmdLine>命令:<CmdValue>*取消*</CmdValue></CmdLine>
                    </History>
                    <CmdLine $pad={2}>命令:<Caret /></CmdLine>
                    <AdLine $y={1}>轻量级画图软件：CAD梦想画图</AdLine>
                    <AdLine $y={33}>手机版CAD软件：CAD梦想看图</AdLine>
                    <VScroll>
                        <Chevron up />
                        <Chevron />
                    </VScroll>
                    <HScroll>
                        <svg width="6" height="10"><path d="M5 1 L1 5 L5 9" fill="none" stroke="#555" strokeWidth="1.4" /></svg>
                        <HThumb />
                        <svg width="6" height="10"><path d="M1 1 L5 5 L1 9" fill="none" stroke="#555" strokeWidth="1.4" /></svg>
                    </HScroll>
                </CommandArea>
            </Workspace>
            <StatusBar>
                <StatusCell $w={338} $left $size={21.6}>734.166667,  -128.666667,  0.0000</StatusCell>
                <StatusCell $w={49}>栅格</StatusCell>
                <StatusCell $w={52} $mr={2}>正交</StatusCell>
                <StatusCell $w={52} $on>极轴</StatusCell>
                <StatusCell $w={94} $on>对象捕捉</StatusCell>
                <StatusCell $w={94} $on>对象追踪</StatusCell>
                <StatusCell $w={56} $on>DYN</StatusCell>
                <StatusCell $w={52}>线宽</StatusCell>
                <StatusCell $w={256} $size={21} $color="#1414ee">提交软件问题或增加新功能</StatusCell>
                <LogoCell><Logo size={18} />CAD.MxCloud</LogoCell>
            </StatusBar>
        </Window>
    </>
);

export default App;
